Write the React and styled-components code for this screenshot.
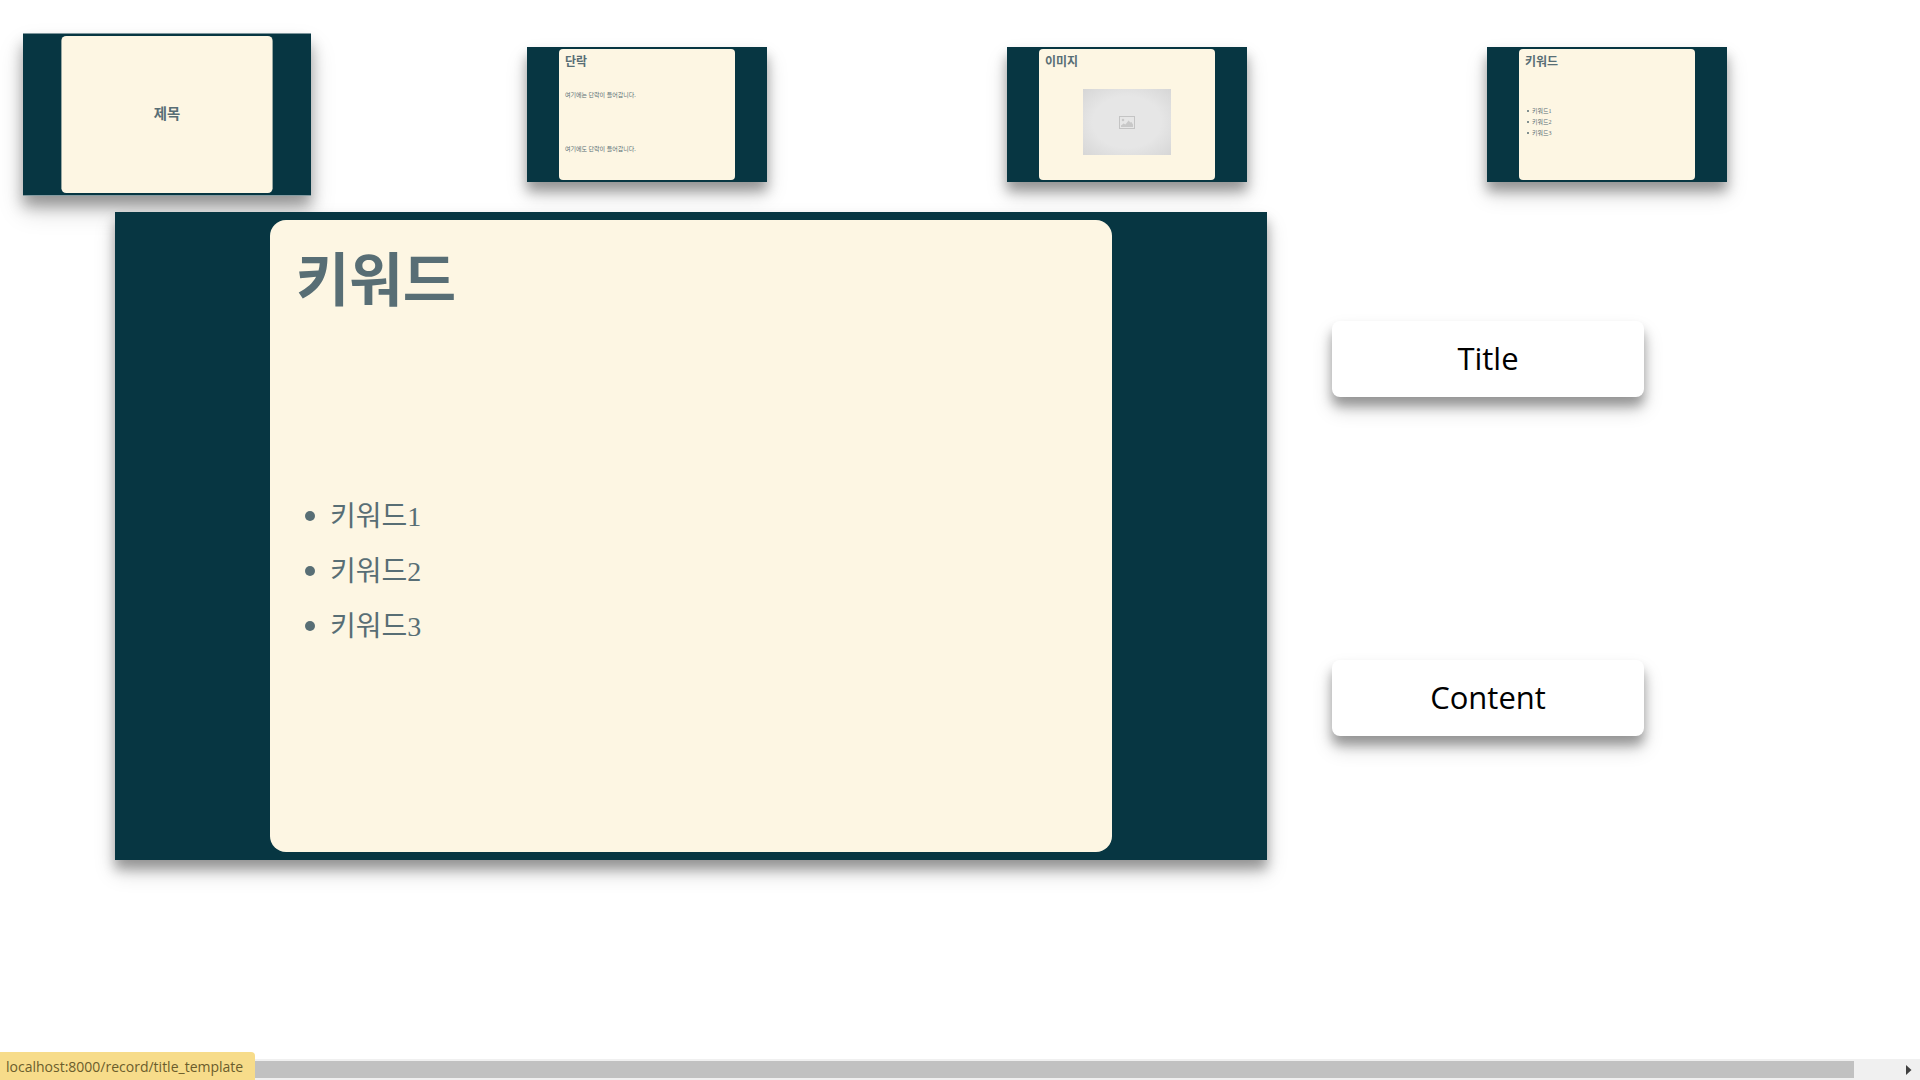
import React from "react";
import styled, { createGlobalStyle, css } from "styled-components";

const GlobalStyle = createGlobalStyle`
  * {
    box-sizing: border-box;
  }
  body {
    margin: 0;
    background: #fff;
    font-family: "Open Sans", "Noto Sans", "Noto Sans CJK KR", sans-serif;
    overflow: hidden;
  }
`;

const raised = css`
  box-shadow: 0 9px 11px rgba(0, 0, 0, 0.3), 0 12px 20px rgba(0, 0, 0, 0.18);
`;

const sizes = {
  small: {
    framePad: "2px 32px",
    radius: 4,
    cardPad: "4px 6px",
    title: 12,
    titleLine: 15,
    text: 6,
    textLine: 11,
    indent: 7,
    bullet: 2,
    bulletGap: 3,
  },
  large: {
    framePad: "8px 155px",
    radius: 16,
    cardPad: "21px 26px",
    title: 58,
    titleLine: 70,
    text: 28,
    textLine: 55,
    indent: 34,
    bullet: 10,
    bulletGap: 15,
  },
};

const Page = styled.div`
  min-height: 100vh;
  display: flex;
  flex-direction: column;
  position: relative;
`;

const TemplateRow = styled.nav`
  display: grid;
  grid-template-columns: repeat(4, 1fr);
  padding-top: 47px;
`;

const TemplateLink = styled.a`
  display: block;
  width: 240px;
  margin-left: 47px;
  text-decoration: none;
  ${raised}
  ${(p) => p.$hovered && "transform: scale(1.2);"}
`;

const Frame = styled.div`
  display: flex;
  aspect-ratio: 16 / 9;
  padding: ${(p) => sizes[p.$size].framePad};
  background: #073642;
`;

const Card = styled.section`
  flex: 1;
  display: flex;
  flex-direction: column;
  padding: ${(p) => sizes[p.$size].cardPad};
  border-radius: ${(p) => sizes[p.$size].radius}px;
  background: #fdf6e3;
  color: #586e75;
`;

const SlideTitle = styled.h2`
  margin: ${(p) => (p.$centered ? "auto" : "0")};
  padding-bottom: ${(p) => (p.$centered ? "5px" : "0")};
  font-family: "Noto Sans CJK KR", sans-serif;
  font-weight: 700;
  font-size: ${(p) => sizes[p.$size].title}px;
  line-height: ${(p) => sizes[p.$size].titleLine}px;
`;

const SlideBody = styled.div`
  flex: 1;
  display: flex;
  flex-direction: column;
  justify-content: space-around;
  font-family: "Liberation Serif", "Noto Sans CJK KR", serif;
  font-size: ${(p) => sizes[p.$size].text}px;
  line-height: ${(p) => sizes[p.$size].textLine}px;
`;

const Paragraph = styled.p`
  margin: 0;
`;

const KeywordList = styled.ul`
  margin: 0;
  padding: 0 0 0 ${(p) => sizes[p.$size].indent - sizes[p.$size].bullet - sizes[p.$size].bulletGap}px;
  list-style: none;
`;

const Keyword = styled.li`
  display: flex;
  align-items: center;
  gap: ${(p) => sizes[p.$size].bulletGap}px;

  &::before {
    content: "";
    width: ${(p) => sizes[p.$size].bullet}px;
    height: ${(p) => sizes[p.$size].bullet}px;
    border-radius: 50%;
    background: currentColor;
  }
`;

const Placeholder = styled.div`
  align-self: center;
  display: flex;
  align-items: center;
  justify-content: center;
  width: 88px;
  height: 66px;
  background: radial-gradient(ellipse at center, #e6e6e6 55%, #d6d6d6 100%);
`;

const Workspace = styled.main`
  position: relative;
  display: flex;
  align-items: flex-start;
  gap: 65px;
  margin-top: 30px;
  padding-left: 115px;
`;

const Stage = styled.div`
  width: 60vw;
  ${raised}
`;

const Fields = styled.div`
  display: flex;
  flex-direction: column;
  gap: 263px;
  padding-top: 109px;
`;

const FieldButton = styled.button`
  width: 312px;
  height: 76px;
  padding: 0 0 2px;
  border: 0;
  border-radius: 8px;
  background: #fff;
  color: #000;
  font-family: inherit;
  font-size: 31px;
  line-height: 42px;
  ${raised}
`;

const ScrollTrack = styled.div`
  display: flex;
  align-items: center;
  justify-content: space-between;
  height: 21px;
  margin-top: auto;
  background: #f0f0f0;
`;

const ScrollThumb = styled.div`
  flex: 1;
  height: 17px;
  background: #c1c1c1;
`;

const ScrollArrow = styled.button`
  display: flex;
  align-items: center;
  justify-content: flex-end;
  width: 66px;
  height: 21px;
  padding: 0 8px 0 0;
  border: 0;
  background: transparent;
`;

const LinkStatus = styled.div`
  position: absolute;
  left: 0;
  bottom: 0;
  height: 28px;
  padding: 0 12px 0 6px;
  border-top-right-radius: 4px;
  background: #f7dc8a;
  color: #6b5d2c;
  font-family: "Open Sans", sans-serif;
  font-size: 14px;
  line-height: 30px;
`;

function PictureIcon() {
  return (
    <svg width="16" height="13" viewBox="0 0 16 13" fill="none" aria-hidden="true">
      <rect x="0.5" y="0.5" width="15" height="12" stroke="#c4c4c4" />
      <circle cx="4" cy="4" r="1.3" fill="#c8c8c8" />
      <path d="M2 11V9.5l2.6-2 1.8 1 3.2-4 1.8 2 1-.6L14 8.500V11z" fill="#c8c8c8" />
    </svg>
  );
}

function KeywordSlide({ size }) {
  return (
    <Frame $size={size}>
      <Card $size={size}>
        <SlideTitle $size={size}>키워드</SlideTitle>
        <SlideBody $size={size}>
          <KeywordList $size={size}>
            <Keyword $size={size}>키워드1</Keyword>
            <Keyword $size={size}>키워드2</Keyword>
            <Keyword $size={size}>키워드3</Keyword>
          </KeywordList>
        </SlideBody>
      </Card>
    </Frame>
  );
}

export default function App() {
  return (
    <Page>
      <GlobalStyle />
      <TemplateRow>
        <TemplateLink href="/record/title_template" $hovered>
          <Frame $size="small">
            <Card $size="small">
              <SlideTitle $size="small" $centered>제목</SlideTitle>
            </Card>
          </Frame>
        </TemplateLink>
        <TemplateLink href="/record/paragraph_template">
          <Frame $size="small">
            <Card $size="small">
              <SlideTitle $size="small">단락</SlideTitle>
              <SlideBody $size="small">
                <Paragraph>여기에는 단락이 들어갑니다.</Paragraph>
                <Paragraph>여기에도 단락이 들어갑니다.</Paragraph>
              </SlideBody>
            </Card>
          </Frame>
        </TemplateLink>
        <TemplateLink href="/record/image_template">
          <Frame $size="small">
            <Card $size="small">
              <SlideTitle $size="small">이미지</SlideTitle>
              <SlideBody $size="small">
                <Placeholder>
                  <PictureIcon />
                </Placeholder>
              </SlideBody>
            </Card>
          </Frame>
        </TemplateLink>
        <TemplateLink href="/record/keyword_template">
          <KeywordSlide size="small" />
        </TemplateLink>
      </TemplateRow>

      <Workspace>
        <Stage>
          <KeywordSlide size="large" />
        </Stage>
        <Fields>
          <FieldButton type="button">Title</FieldButton>
          <FieldButton type="button">Content</FieldButton>
        </Fields>
      </Workspace>

      <ScrollTrack>
        <ScrollThumb />
        <ScrollArrow type="button" aria-label="Scroll right">
          <svg width="6" height="10" viewBox="0 0 6 10" aria-hidden="true">
            <path d="M0 0l5.500 5L0 10z" fill="#404040" />
          </svg>
        </ScrollArrow>
      </ScrollTrack>
      <LinkStatus>localhost:8000/record/title_template</LinkStatus>
    </Page>
  );
}
